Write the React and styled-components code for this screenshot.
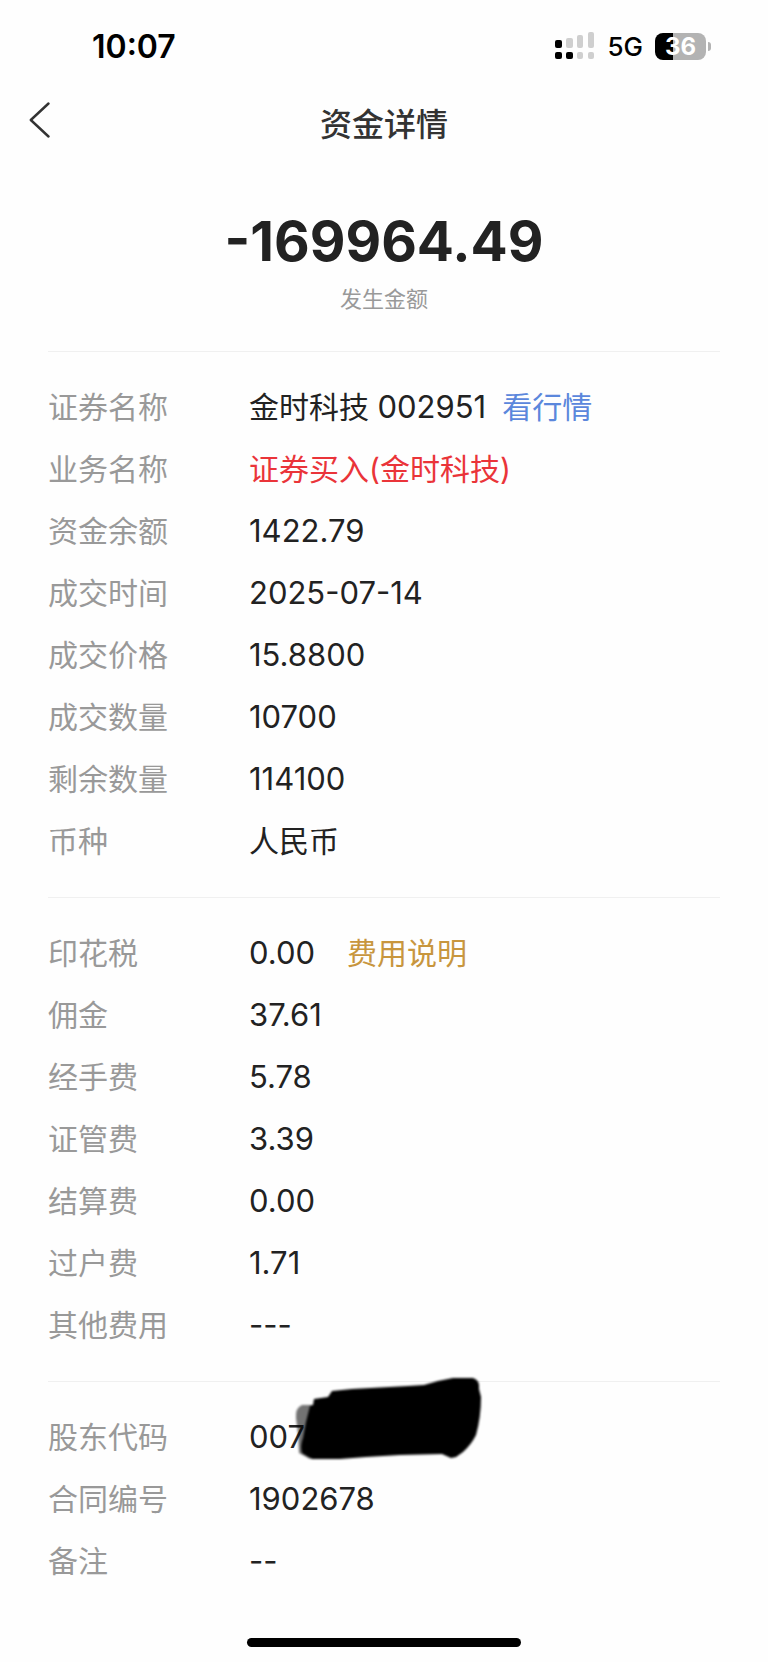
import styled, { createGlobalStyle } from 'styled-components';

const securityRows = [
  {
    label: '证券名称',
    value: '金时科技 ',
    number: '002951',
    link: { text: '看行情', href: '#quote', color: '#5b87dc', gap: 16 },
  },
  { label: '业务名称', value: '证券买入(金时科技)', color: '#ea3439' },
  { label: '资金余额', number: '1422.79' },
  { label: '成交时间', number: '2025-07-14' },
  { label: '成交价格', number: '15.8800' },
  { label: '成交数量', number: '10700' },
  { label: '剩余数量', number: '114100' },
  { label: '币种', value: '人民币' },
];

const feeRows = [
  { label: '印花税', number: '0.00', link: { text: '费用说明', href: '#fees', color: '#c8963e', gap: 32 } },
  { label: '佣金', number: '37.61' },
  { label: '经手费', number: '5.78' },
  { label: '证管费', number: '3.39' },
  { label: '结算费', number: '0.00' },
  { label: '过户费', number: '1.71' },
  { label: '其他费用', number: '---' },
];

const accountRows = [
  { label: '股东代码', number: '007', masked: true },
  { label: '合同编号', number: '1902678' },
  { label: '备注', number: '--' },
];

const SignalIcon = () => (
  <svg width="40" height="28" viewBox="0 0 40 28" aria-hidden="true">
    <g fill="#cfcfcf">
      <rect x="11" y="6" width="7" height="10" rx="2" />
      <rect x="22" y="3" width="6" height="13" rx="2" />
      <rect x="33" y="0" width="6" height="16" rx="2" />
      <rect x="22" y="20" width="6" height="7" rx="2" />
      <rect x="33" y="20" width="6" height="7" rx="2" />
    </g>
    <rect x="0" y="8" width="7" height="8" rx="2" />
    <rect x="0" y="20" width="7" height="7" rx="2" />
    <rect x="11" y="20" width="7" height="7" rx="2" />
  </svg>
);

const ScribbleMask = () => (
  <S.Scribble width="200" height="96" viewBox="0 0 200 96" aria-hidden="true">
    <defs>
      <filter id="soft" x="-5%" y="-5%" width="110%" height="110%">
        <feGaussianBlur stdDeviation="1.3" />
      </filter>
    </defs>
    <g filter="url(#soft)">
      <path opacity="0.55" d="M12 33 Q5 36 6 46 L8 62 L9 81 L20 87 L40 60 L36 33 Z" />
      <path d="M20 34 L23 33 L24 27 L38 25 L42 19 L62 17 L118 14 L134 13 L148 9 L163 6 L183 6 Q190 8 189 17 L191 25 Q191 45 186 63 Q181 73 173 80 L166 85 L161 86 L152 82 L110 83 L76 85 L50 87 L22 87 L12 81 Q10 74 13 66 L16 50 Z" />
    </g>
  </S.Scribble>
);

const DetailSection = ({ rows }) => (
  <S.Section>
    {rows.map(({ label, value, number, color, link, masked }) => (
      <S.Row key={label}>
        <S.Label>{label}</S.Label>
        <S.Value $color={color}>
          {value}
          {number && <S.Number>{number}</S.Number>}
          {link && (
            <S.ValueLink href={link.href} $color={link.color} $gap={link.gap}>
              {link.text}
            </S.ValueLink>
          )}
          {masked && <ScribbleMask />}
        </S.Value>
      </S.Row>
    ))}
  </S.Section>
);

const App = () => {
  return (
    <>
      <GlobalStyle />
      <S.Page>
        <S.StatusBar>
          <S.Time>10:07</S.Time>
          <S.StatusIcons>
            <SignalIcon />
            <S.Network>5G</S.Network>
            <S.Battery>
              <S.BatteryBody>36</S.BatteryBody>
              <S.BatteryTip />
            </S.Battery>
          </S.StatusIcons>
        </S.StatusBar>
        <S.Header>
          <S.BackButton type="button" aria-label="返回">
            <svg width="22" height="36" viewBox="0 0 22 36" fill="none" stroke="#333" strokeWidth="2.4">
              <path d="M19.5 1.5 L1.8 18 L19.5 34.5" strokeLinecap="round" strokeLinejoin="round" />
            </svg>
          </S.BackButton>
          <S.Title>资金详情</S.Title>
        </S.Header>
        <S.Summary>
          <S.Amount>-169964.49</S.Amount>
          <S.Caption>发生金额</S.Caption>
        </S.Summary>
        <DetailSection rows={securityRows} />
        <DetailSection rows={feeRows} />
        <DetailSection rows={accountRows} />
        <S.HomeIndicator />
      </S.Page>
    </>
  );
};

export default App;

const GlobalStyle = createGlobalStyle`
  * {
    box-sizing: border-box;
  }
  body {
    margin: 0;
    background: #fefefe;
    color: #222;
    font-family: Inter, 'Noto Sans CJK SC', sans-serif;
  }
`;

const S = {
  Page: styled.main`
    display: flex;
    flex-direction: column;
    min-height: 100vh;
    padding-bottom: 15px;
  `,
  StatusBar: styled.div`
    display: flex;
    align-items: center;
    justify-content: space-between;
    height: 92px;
    padding: 0 57px 0 92px;
    color: #000;
  `,
  Time: styled.span`
    font-size: 32px;
    font-weight: 600;
  `,
  StatusIcons: styled.div`
    display: flex;
    align-items: center;
    gap: 12px;
  `,
  Network: styled.span`
    font-size: 26px;
    font-weight: 500;
  `,
  Battery: styled.div`
    display: flex;
    align-items: center;
    gap: 2px;
  `,
  BatteryBody: styled.span`
    width: 51px;
    border-radius: 8px;
    background: linear-gradient(to right, #000 36%, #b3b3b3 36%);
    color: #fff;
    font-size: 24px;
    font-weight: 700;
    line-height: 27px;
    text-align: center;
  `,
  BatteryTip: styled.span`
    width: 3px;
    height: 9px;
    border-radius: 0 4px 4px 0;
    background: #b3b3b3;
  `,
  Header: styled.header`
    display: grid;
    grid-template-columns: 80px 1fr 80px;
    align-items: center;
    height: 66px;
  `,
  BackButton: styled.button`
    display: flex;
    width: 80px;
    padding: 0 0 10px 29px;
    border: 0;
    background: none;
    cursor: pointer;
  `,
  Title: styled.h1`
    margin: 0;
    color: #333;
    font-size: 32px;
    font-weight: 500;
    line-height: 48px;
    text-align: center;
  `,
  Summary: styled.section`
    padding: 51px 48px 36px;
    text-align: center;
  `,
  Amount: styled.p`
    margin: 0;
    font-size: 55px;
    font-weight: 700;
    line-height: 64px;
  `,
  Caption: styled.p`
    margin: 10px 0 0;
    color: #999;
    font-size: 22px;
    line-height: 32px;
  `,
  Section: styled.dl`
    margin: 0 48px;
    padding: 24px 0 25px;
    border-top: 1px solid #f0f0f0;
  `,
  Row: styled.div`
    display: grid;
    grid-template-columns: 201px 1fr;
    font-size: 30px;
    line-height: 62px;
  `,
  Label: styled.dt`
    color: #999;
  `,
  Value: styled.dd`
    position: relative;
    height: 62px;
    margin: 0;
    color: ${(props) => props.$color || '#222'};
  `,
  Number: styled.span`
    font-size: 31px;
  `,
  ValueLink: styled.a`
    margin-left: ${(props) => props.$gap}px;
    color: ${(props) => props.$color};
    text-decoration: none;
  `,
  Scribble: styled.svg`
    position: absolute;
    top: -34px;
    left: 41px;
  `,
  HomeIndicator: styled.div`
    width: 274px;
    height: 9px;
    margin: auto auto 0;
    border-radius: 5px;
    background: #000;
  `,
};
